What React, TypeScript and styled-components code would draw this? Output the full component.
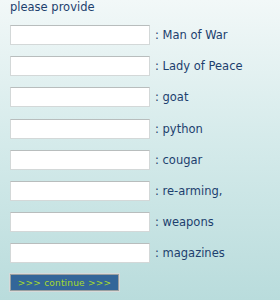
import React from "react"
import styled, { createGlobalStyle } from "styled-components"

const GlobalStyle = createGlobalStyle`
  html, body {
    margin: 0;
    padding: 0;
  }
  body {
    font-family: "DejaVu Sans", Verdana, sans-serif;
    background: linear-gradient(180deg, #f2f8f8 0%, #d6ebeb 45%, #b9dcdc 100%);
    min-height: 300px;
  }
`

const Form = styled.form`
  padding: 0 10px;
  display: grid;
`

const Intro = styled.div`
  color: #1d3f6e;
  font-size: 11.5px;
  line-height: 15px;
  height: 25px;
`

const Rows = styled.div`
  display: grid;
  row-gap: 11.2px;
`

const Row = styled.label`
  display: flex;
  align-items: center;
  gap: 5px;
  height: 20px;
  color: #1d3f6e;
  font-size: 11.5px;
`

const Field = styled.input`
  box-sizing: border-box;
  width: 140px;
  height: 20px;
  margin: 0;
  border: 1px solid #d3d8d8;
  border-top-color: #b8bdbd;
  background: #ffffff;
  font-size: 11px;
`

const Submit = styled.button`
  box-sizing: border-box;
  margin-top: 11px;
  width: 109px;
  height: 17px;
  padding: 0;
  background: #336699;
  border: 1px solid #9aa0a0;
  outline: 1px solid #d6dada;
  color: #a8dc2c;
  font-family: "DejaVu Sans", Verdana, sans-serif;
  font-size: 9px;
  letter-spacing: 0.2px;
  cursor: pointer;
`

const labels = [
  "Man of War",
  "Lady of Peace",
  "goat",
  "python",
  "cougar",
  "re-arming,",
  "weapons",
  "magazines",
]

const App = () => {
  return (
    <>
      <GlobalStyle />
      <Form onSubmit={(e) => e.preventDefault()}>
        <Intro>please provide</Intro>
        <Rows>
          {labels.map((l) => (
            <Row key={l}>
              <Field type="text" />
              <span>: {l}</span>
            </Row>
          ))}
        </Rows>
        <div>
          <Submit type="submit">&gt;&gt;&gt; continue &gt;&gt;&gt;</Submit>
        </div>
      </Form>
    </>
  )
}

export default App
